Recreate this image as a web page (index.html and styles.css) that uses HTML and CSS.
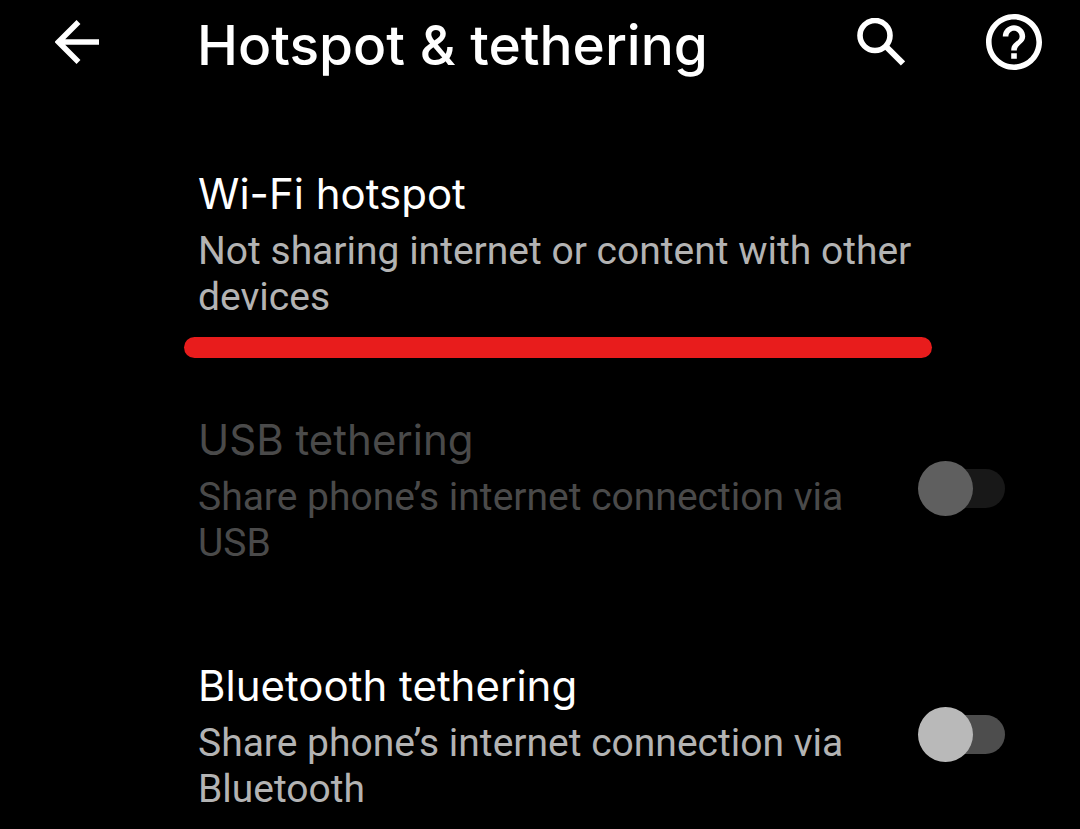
FILE: index.html
```html
<!DOCTYPE html>
<html lang="en">
<head>
<meta charset="utf-8">
<meta name="viewport" content="width=device-width, initial-scale=1">
<title>Hotspot &amp; tethering</title>
<link rel="stylesheet" href="styles.css">
</head>
<body>
<header class="app-bar">
  <button class="icon-button" type="button" aria-label="Back">
    <svg class="icon-back" viewBox="0 0 44 44" aria-hidden="true"><path d="M44 22H4M23.500 2 3.500 22l20 20" fill="none" stroke="currentColor" stroke-width="5.500"/></svg>
  </button>
  <h1 class="title">Hotspot &amp; tethering</h1>
  <div class="actions">
    <button class="icon-button" type="button" aria-label="Search">
      <svg class="icon-search" viewBox="0 0 48 48" aria-hidden="true"><circle cx="18" cy="17.500" r="15" fill="none" stroke="currentColor" stroke-width="5.600"/><path d="M28 27.500 46 45.500" fill="none" stroke="currentColor" stroke-width="6"/></svg>
    </button>
    <button class="icon-button" type="button" aria-label="Help">
      <svg class="icon-help" viewBox="2 2 20 20" aria-hidden="true"><path fill="currentColor" d="M11 18h2v-2h-2v2zm1-16C6.480 2 2 6.480 2 12s4.480 10 10 10 10-4.480 10-10S17.520 2 12 2zm0 18c-4.410 0-8-3.590-8-8s3.590-8 8-8 8 3.590 8 8-3.590 8-8 8zm0-14c-2.210 0-4 1.790-4 4h2c0-1.100.9-2 2-2s2 .9 2 2c0 2-3 1.750-3 5h2c0-2.250 3-2.500 3-5 0-2.210-1.790-4-4-4z"/></svg>
    </button>
  </div>
</header>
<main class="settings">
  <a class="row row-marked" href="#wifi">
    <span class="text">
      <span class="label">Wi-Fi hotspot</span>
      <span class="summary">Not sharing internet or content with other devices</span>
    </span>
  </a>
  <label class="row row-disabled">
    <span class="text">
      <span class="label">USB tethering</span>
      <span class="summary">Share phone’s internet connection via USB</span>
    </span>
    <input class="switch" type="checkbox" role="switch" disabled>
  </label>
  <label class="row">
    <span class="text">
      <span class="label">Bluetooth tethering</span>
      <span class="summary">Share phone’s internet connection via Bluetooth</span>
    </span>
    <input class="switch" type="checkbox" role="switch">
  </label>
</main>
</body>
</html>
```
FILE: styles.css
```css
* { box-sizing: border-box; }
body { margin: 0; background: #000; color: #fff; font-family: Roboto, sans-serif; }
.app-bar { display: flex; align-items: center; padding: 7px 38px 7px 55px; }
.icon-button { display: flex; padding: 0; border: 0; background: none; color: inherit; cursor: pointer; }
.icon-back { width: 44px; height: 44px; }
.icon-search { width: 48px; height: 48px; }
.icon-help { width: 56px; height: 56px; }
.title { flex: 1; margin: 0; padding: 6px 0 0 98px; font: 500 55px/64px Inter, sans-serif; white-space: nowrap; }
.actions { display: flex; align-items: center; gap: 81px; }
.settings { padding: 35px 0 0 198px; }
.row { display: flex; align-items: center; justify-content: space-between; padding: 45px 75px 45px 0; color: inherit; text-decoration: none; }
.text { display: flex; flex: 0 1 720px; flex-direction: column; gap: 4px; }
.label { font-family: Inter, sans-serif; font-size: 42px; line-height: 60px; }
.summary { color: #b3b3b3; font-size: 39px; line-height: 46px; }
.row-marked { position: relative; }
.row-marked::after { content: ""; position: absolute; left: -14px; right: 148px; bottom: 7px; height: 21px; border-radius: 11px; background: #e81c1c; }
.row-disabled .label, .row-disabled .summary { color: #4a4a4a; }
.switch { position: relative; flex: none; appearance: none; width: 87px; height: 55px; margin: 0; background: none; }
.switch::before { content: ""; position: absolute; inset: 8px 0 8px 12px; border-radius: 20px; background: #4d4d4d; }
.switch::after { content: ""; position: absolute; left: 0; top: 0; width: 55px; height: 55px; border-radius: 50%; background: #b9b9b9; }
.switch:disabled::before { background: #181818; }
.switch:disabled::after { background: #5f5f5f; }
```
